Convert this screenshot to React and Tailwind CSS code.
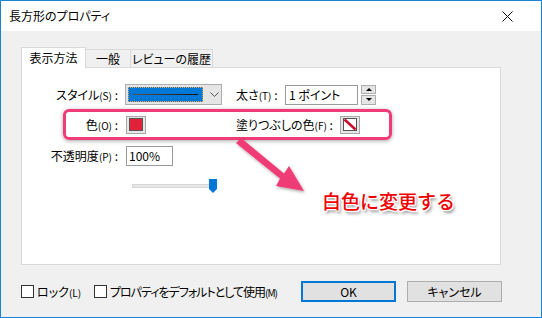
const jp = { fontFamily: '"Noto Sans CJK JP", "Liberation Sans", sans-serif' };

function Paren({ children }) {
  return <span className="text-[10px]">{children}</span>;
}

function Swatch({ fill }) {
  return (
    <div className="flex h-[18px] w-[20px] items-center justify-center border border-[#a8a8a8] bg-[#e6e6e6]">
      {fill ? (
        <div className="h-[13px] w-[14px] border border-[#555] bg-[#e3213b]" />
      ) : (
        <svg width="14" height="13" viewBox="0 0 14 13">
          <rect x="0.5" y="0.5" width="13" height="12" fill="#fff" stroke="#555" />
          <line x1="1.5" y1="1.5" x2="12.5" y2="11.5" stroke="#c8102e" strokeWidth="2.6" />
        </svg>
      )}
    </div>
  );
}

export default function App() {
  return (
    <div
      className="relative flex h-[318px] w-[542px] flex-col border border-[#1883d7] bg-[#f0f0f0] text-[12px] text-black [font-feature-settings:'palt']"
      style={jp}
    >
      {/* title bar */}
      <div className="flex h-[30px] items-center justify-between bg-white pl-[8px] pr-[28px]">
        <span className="leading-none">長方形のプロパティ</span>
        <svg width="11" height="11" viewBox="0 0 11 11">
          <path d="M0.5 0.5L10.5 10.5M10.5 0.5L0.5 10.5" stroke="#111" strokeWidth="1" />
        </svg>
      </div>

      <div className="flex flex-col pl-[20px]">
        {/* tabs */}
        <div className="mt-[15px] flex h-[21px] items-end">
          <div className="relative z-10 -mb-px flex h-[21px] w-[65px] items-center justify-center border border-b-0 border-[#d9d9d9] bg-white pb-[1px]">
            表示方法
          </div>
          <div className="flex h-[18px] w-[45px] items-center justify-center border border-l-0 border-b-0 border-[#d9d9d9] bg-[#f0f0f0]">
            一般
          </div>
          <div className="flex h-[18px] w-[82px] items-center justify-center border border-l-0 border-b-0 border-[#d9d9d9] bg-[#f0f0f0]">
            レビューの履歴
          </div>
        </div>

        {/* panel */}
        <div className="flex h-[198px] w-[480px] flex-col border border-[#d9d9d9] bg-white pt-[16px]">
          {/* row 1 */}
          <div className="flex h-[21px] items-center">
            <div className="w-[96px] text-right">
              スタイル<Paren>(S)</Paren> :
            </div>
            <div className="ml-[7px] flex h-[21px] w-[97px] items-center border border-[#adadad] bg-[#e5e5e5] pl-[2px]">
              <div className="flex h-[15px] w-[75px] items-center border border-dotted border-[#f0a040] bg-[#0078d7] px-[4px]">
                <div className="h-px w-full bg-[linear-gradient(90deg,#555,#111)]" />
              </div>
              <svg className="ml-[7px]" width="9" height="6" viewBox="0 0 9 6">
                <path d="M0.5 0.5L4.5 4.5L8.5 0.5" fill="none" stroke="#555" strokeWidth="1" />
              </svg>
            </div>
            <div className="ml-[14px] w-[49px]">
              太さ<Paren>(T)</Paren> :
            </div>
            <div className="flex h-[20px] w-[73px] items-center border border-[#9a9a9a] bg-white pl-[3px]">
              1 ポイント
            </div>
            <div className="ml-[3px] flex h-[20px] w-[15px] flex-col gap-px">
              <div className="flex flex-1 items-center justify-center border border-[#adadad] bg-[#e5e5e5]">
                <div className="h-0 w-0 border-x-[3px] border-b-[3px] border-x-transparent border-b-black" />
              </div>
              <div className="flex flex-1 items-center justify-center border border-[#adadad] bg-[#e5e5e5]">
                <div className="h-0 w-0 border-x-[3px] border-t-[3px] border-x-transparent border-t-black" />
              </div>
            </div>
          </div>

          {/* row 2 highlighted */}
          <div className="ml-[41px] mt-[4px] flex h-[31px] w-[329px] items-center rounded-[6px] border-[3px] border-[#ef3b76] shadow-[0_1px_4px_rgba(0,0,0,0.35)]">
            <div className="w-[52px] text-right">
              色<Paren>(O)</Paren> :
            </div>
            <div className="ml-[8px]">
              <Swatch fill />
            </div>
            <div className="ml-[90px] w-[104px]">
              塗りつぶしの色<Paren>(F)</Paren> :
            </div>
            <Swatch />
          </div>

          {/* row 3 */}
          <div className="mt-[6px] flex h-[20px] items-center">
            <div className="w-[96px] text-right">
              不透明度<Paren>(P)</Paren> :
            </div>
            <div className="ml-[8px] flex h-[20px] w-[47px] items-center border border-[#9a9a9a] bg-white pl-[2px]">
              100%
            </div>
          </div>

          {/* slider */}
          <div className="ml-[110px] mt-[13px] flex h-[14px] w-[88px] items-center">
            <div className="h-[4px] w-[80px] border border-[#d6d6d6] bg-[#e7e7e7]" />
            <div className="-ml-[3px] flex h-[14px] w-[8px] flex-col items-center">
              <div className="h-[10px] w-[8px] bg-[#0078d7]" />
              <div className="h-0 w-0 border-x-[4px] border-t-[4px] border-x-transparent border-t-[#0078d7]" />
            </div>
          </div>
        </div>

        {/* bottom row */}
        <div className="mt-[16px] flex h-[21px] items-center">
          <div className="flex w-[73px] items-center">
            <div className="h-[13px] w-[13px] border border-[#333] bg-white" />
            <span className="ml-[3px]">
              ロック<Paren>(L)</Paren>
            </span>
          </div>
          <div className="flex w-[207px] items-center">
            <div className="h-[13px] w-[13px] border border-[#333] bg-white" />
            <span className="ml-[3px] tracking-[-1px]">
              プロパティをデフォルトとして使用<Paren>(M)</Paren>
            </span>
          </div>
          <div className="flex h-[21px] w-[95px] items-center justify-center border-2 border-[#0078d7] bg-[#e1e1e1]">
            OK
          </div>
          <div className="ml-[11px] flex h-[21px] w-[95px] items-center justify-center border border-[#adadad] bg-[#e1e1e1]">
            キャンセル
          </div>
        </div>
      </div>

      {/* annotation arrow */}
      <svg
        className="pointer-events-none absolute left-0 top-0"
        width="542"
        height="318"
        viewBox="0 0 542 318"
      >
        <defs>
          <filter id="sh" x="-20%" y="-20%" width="140%" height="140%">
            <feDropShadow dx="1" dy="1.5" stdDeviation="1.5" floodColor="#000" floodOpacity="0.35" />
          </filter>
        </defs>
        <polygon
          points="235,142 240,137 283,172.5 288,165 303,190 275,185 279,177.5"
          fill="#ef3b76"
          filter="url(#sh)"
        />
      </svg>
      <div className="pointer-events-none absolute left-[321px] top-[187px] text-[19px] font-medium leading-[26px] text-[#f00000] [font-feature-settings:normal] [text-shadow:-1px_-1px_0_#fff,1px_-1px_0_#fff,-1px_1px_0_#fff,1px_1px_0_#fff,0_0_2px_#fff,2px_3px_3px_rgba(0,0,0,0.45)]">
        白色に変更する
      </div>
    </div>
  );
}
